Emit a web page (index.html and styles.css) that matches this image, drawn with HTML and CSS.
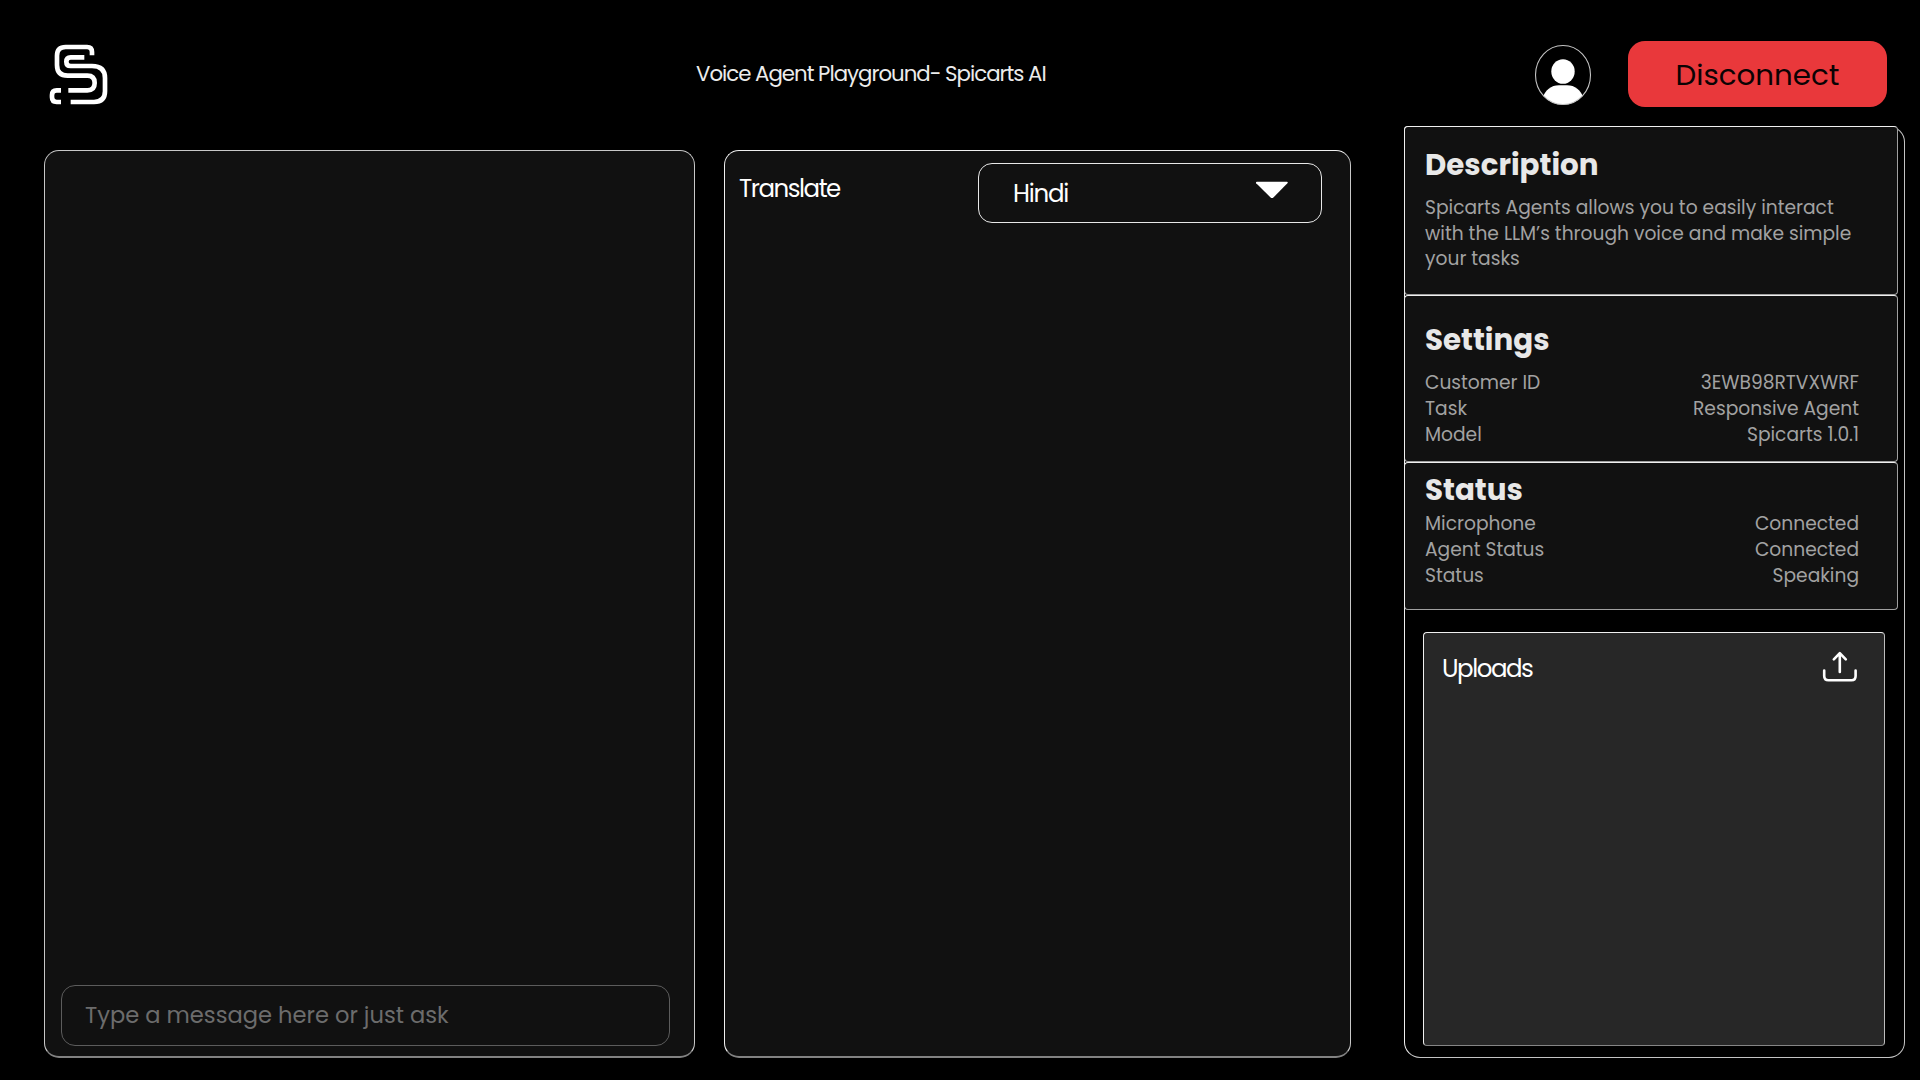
FILE: index.html
```html
<!DOCTYPE html>
<html lang="en">
<head>
  <meta charset="utf-8">
  <title>Voice Agent Playground</title>
  <link rel="stylesheet" href="styles.css">
</head>
<body>
  <header class="topbar">
    <svg class="logo" viewBox="54 39 180 186" fill="none" stroke="#fff" stroke-width="14">
      <path d="M186 76V66Q186 51 171 51H107Q81 51 81 77V105Q81 137 113 137H172Q194 137 194 159T172 181H115"/>
      <path d="M163 82H122Q109 82 109 95T122 108H186Q225 108 225 144V184Q225 216 192 216H122"/>
      <path d="M93 181H80Q66 181 66 195V202Q66 216 80 216H93"/>
    </svg>
    <h1 class="title">Voice Agent Playground- Spicarts AI</h1>
    <svg class="avatar" viewBox="0 0 58 62">
      <defs><clipPath id="face"><ellipse cx="29" cy="31" rx="27.8" ry="29.8"/></clipPath></defs>
      <ellipse cx="29" cy="27.5" rx="11.7" ry="12.3" fill="#fff"/>
      <path d="M8 62V55Q13 41.3 25 41.3H33Q45 41.3 50 55V62Z" fill="#fff" clip-path="url(#face)"/>
      <ellipse cx="29" cy="31" rx="27.5" ry="29.5" fill="none" stroke="#c4c4c4" stroke-width="1.1"/>
    </svg>
    <button class="disconnect">Disconnect</button>
  </header>

  <main class="workspace">
    <section class="panel chat">
      <input class="message" type="text" placeholder="Type a message here or just ask">
    </section>

    <section class="panel translate">
      <h2 class="label translate-label">Translate</h2>
      <div class="select">
        <span class="language">Hindi</span>
        <svg class="caret" viewBox="0 0 34 18"><path d="M2 .8H32Q33.4 .8 32.4 2.2L18.4 16.4Q17 17.6 15.6 16.4L1.2 2.2Q.4 .8 2 .8Z" fill="#fff"/></svg>
      </div>
    </section>

    <aside class="sidebar">
      <section class="card description">
        <h2>Description</h2>
        <p>Spicarts Agents allows you to easily interact<br>with the LLM’s through voice and make simple<br>your tasks</p>
      </section>
      <section class="card settings">
        <h2>Settings</h2>
        <dl>
          <div><dt>Customer ID</dt><dd>3EWB98RTVXWRF</dd></div>
          <div><dt>Task</dt><dd>Responsive Agent</dd></div>
          <div><dt>Model</dt><dd>Spicarts 1.0.1</dd></div>
        </dl>
      </section>
      <section class="card status">
        <h2>Status</h2>
        <dl>
          <div><dt>Microphone</dt><dd>Connected</dd></div>
          <div><dt>Agent Status</dt><dd>Connected</dd></div>
          <div><dt>Status</dt><dd>Speaking</dd></div>
        </dl>
      </section>
      <section class="uploads">
        <h2 class="label">Uploads</h2>
        <svg class="upload-icon" viewBox="0 0 36 32" fill="none" stroke="#fff" stroke-width="2.6" stroke-linecap="round" stroke-linejoin="round">
          <path d="M17.8 21V2.5M11.8 8.3L17.8 2.2L23.8 8.3"/>
          <path d="M2.2 19.5V25Q2.2 29.3 6.5 29.3H29.5Q33.6 29.3 33.6 25V19.5"/>
        </svg>
      </section>
    </aside>
  </main>
</body>
</html>
```
FILE: styles.css
```css
* { box-sizing: border-box; margin: 0; padding: 0; }

body {
  width: 1920px;
  height: 1080px;
  overflow: hidden;
  background: #000;
  color: #fff;
  font-family: Poppins, Inter, sans-serif;
}

/* Header */
.topbar {
  display: flex;
  align-items: flex-start;
  height: 126px;
  padding-left: 48px;
}
.logo { width: 60px; height: 62px; margin-top: 43px; }
.title {
  width: 360px;
  margin: 61px 0 0 588px;
  color: #ececec;
  font-size: 21.3px;
  font-weight: 400;
  line-height: 25px;
  letter-spacing: -1px;
  white-space: nowrap;
}
.avatar { width: 58px; height: 62px; margin: 44px 0 0 478px; }
.disconnect {
  width: 259px;
  height: 66px;
  margin: 41px 0 0 36px;
  padding-top: 1px;
  border: 0;
  border-radius: 17px;
  background: #e9383b;
  color: #0b0304;
  font: inherit;
  font-size: 29.3px;
}

/* Columns */
.workspace {
  display: grid;
  grid-template-columns: 651px 627px 525px;
  column-gap: 29px;
  height: 932px;
  padding-left: 44px;
}
.panel {
  height: 908px;
  margin-top: 24px;
  border: 1px solid #c8c8c8;
  border-bottom: 2px solid #828282;
  border-radius: 15px;
  background: #111;
}
.sidebar {
  display: flex;
  flex-direction: column;
  margin-left: 24px;
  width: 501px;
  border: 1px solid #c4c4c4;
  border-left-color: #f0f0f0;
  border-radius: 4px 16px 16px 16px;
}
.label {
  font-size: 24.5px;
  font-weight: 400;
  line-height: 30px;
  letter-spacing: -1.48px;
}

/* Conversation */
.chat {
  display: flex;
  flex-direction: column;
  justify-content: flex-end;
  padding: 0 24px 10px 16px;
}
.message {
  height: 61px;
  padding: 0 23px 2px;
  border: 1px solid #5c5c5c;
  border-radius: 14px;
  background: transparent;
  font: inherit;
  font-size: 22.6px;
}
.message::placeholder { color: #6c6c6c; opacity: 1; }

/* Translation */
.translate {
  display: flex;
  justify-content: space-between;
  align-items: flex-start;
  padding: 12px 28px 0 14px;
  border-top-color: #f0f0f0;
  border-left-color: #f0f0f0;
}
.translate-label { margin-top: 11px; }
.select {
  display: flex;
  justify-content: space-between;
  align-items: flex-start;
  width: 344px;
  height: 60px;
  padding: 15px 32px 0 34px;
  border: 1px solid #e8e8e8;
  border-radius: 14px;
}
.language { font-size: 24.5px; line-height: 30px; letter-spacing: -1.25px; }
.caret { width: 34px; height: 18px; margin-top: 2px; }

/* Sidebar cards */
.card {
  width: 494px;
  margin-left: -1px;
  padding-left: 20px;
  padding-right: 38px;
  border: 1px solid #a0a0a0;
  border-left-color: #f0f0f0;
  border-top-color: #f0f0f0;
  border-radius: 4px;
  background: #111;
  color: #a2a2a2;
  font-size: 18.67px;
  line-height: 25.7px;
}
.card h2 {
  color: #e8e8e8;
  font-size: 29.3px;
  font-weight: 700;
  line-height: 34px;
}
.description { height: 169px; margin-top: -1px; padding-top: 21px; }
.description p { margin-top: 13px; white-space: nowrap; }
.settings { height: 167px; padding-top: 27px; }
.settings dl { margin-top: 13.1px; }
.status { height: 148px; padding-top: 10px; }
.status dl { margin-top: 4.1px; }
.card dl div { display: flex; justify-content: space-between; }

/* Uploads */
.uploads {
  display: flex;
  justify-content: space-between;
  align-items: flex-start;
  width: 462px;
  height: 414px;
  margin: 22px 0 0 18px;
  padding: 18px 26px 0 18px;
  border: 1px solid #bdbdbd;
  border-top-color: #f0f0f0;
  border-left-color: #f0f0f0;
  border-bottom-color: #858585;
  border-radius: 4px;
  background: #272727;
}
.uploads .label { margin-top: 3px; }
.upload-icon { width: 36px; height: 32px; }
```
